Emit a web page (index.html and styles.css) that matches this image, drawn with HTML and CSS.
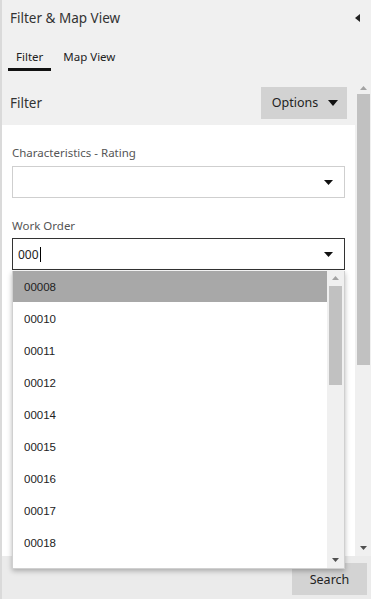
FILE: index.html
```html
<!DOCTYPE html>
<html>
<head>
<meta charset="utf-8">
<link rel="stylesheet" href="styles.css">
</head>
<body>
<div class="app">
  <div class="header">
    <span class="title">Filter &amp; Map View</span>
    <svg class="collapse" width="5" height="8" viewBox="0 0 5 8"><path d="M5 0 L0 4 L5 8 Z" fill="#222"/></svg>
  </div>
  <div class="tabs">
    <div class="tab active">Filter</div>
    <div class="tab">Map View</div>
  </div>
  <div class="main">
    <div class="content">
      <div class="section-head">
        <span class="section-title">Filter</span>
        <button class="options">Options
          <svg width="10" height="6" viewBox="0 0 10 6"><path d="M0 0 L10 0 L5 6 Z" fill="#111"/></svg>
        </button>
      </div>
      <div class="card">
        <div class="field">
          <div class="label">Characteristics - Rating</div>
          <div class="select">
            <span class="value"></span>
            <svg class="caret" width="9" height="5" viewBox="0 0 9 5"><path d="M0 0 L9 0 L4.5 5 Z" fill="#111"/></svg>
          </div>
        </div>
        <div class="field field2">
          <div class="label">Work Order</div>
          <div class="combo">
            <div class="select focused">
              <span class="value">000<span class="cursor"></span></span>
              <svg class="caret" width="9" height="5" viewBox="0 0 9 5"><path d="M0 0 L9 0 L4.5 5 Z" fill="#111"/></svg>
            </div>
            <div class="dropdown">
              <ul class="list">
                <li class="sel">00008</li>
                <li>00010</li>
                <li>00011</li>
                <li>00012</li>
                <li>00014</li>
                <li>00015</li>
                <li>00016</li>
                <li>00017</li>
                <li>00018</li>
              </ul>
              <div class="dscroll">
                <svg class="arr" width="7" height="4" viewBox="0 0 7 4"><path d="M0 4 L7 4 L3.5 0 Z" fill="#a3a3a3"/></svg>
                <div class="dthumb"></div>
                <div class="spacer"></div>
                <svg class="arr" width="7" height="4" viewBox="0 0 7 4"><path d="M0 0 L7 0 L3.5 4 Z" fill="#505050"/></svg>
              </div>
            </div>
          </div>
        </div>
      </div>
    </div>
    <div class="vscroll">
      <svg class="arr" width="7" height="4" viewBox="0 0 7 4"><path d="M0 4 L7 4 L3.5 0 Z" fill="#a3a3a3"/></svg>
      <div class="thumb"></div>
      <div class="spacer"></div>
      <svg class="arr" width="7" height="4" viewBox="0 0 7 4"><path d="M0 0 L7 0 L3.5 4 Z" fill="#505050"/></svg>
    </div>
  </div>
  <div class="footer">
    <button class="search">Search</button>
  </div>
</div>
</body>
</html>
```

FILE: styles.css
```css
* { box-sizing: border-box; }
html, body { margin: 0; padding: 0; }
body {
  background: #f0f0f0;
  font-family: "Noto Sans", "Open Sans", sans-serif;
  color: #333;
}
.app {
  width: 371px;
  height: 599px;
  border-left: 2px solid #dadada;
  display: flex;
  flex-direction: column;
  overflow: hidden;
}
.header {
  height: 36px;
  display: flex;
  align-items: center;
  justify-content: space-between;
  padding: 0 11px 0 8px;
}
.title { font-size: 13.5px; color: #333; }
.tabs {
  display: flex;
  padding: 12px 0 0 6px;
  gap: 4px;
  height: 44px;
}
.tab {
  font-size: 11.5px;
  line-height: 18px;
  height: 23px;
  padding: 0 8px 2px;
  color: #222;
  border-bottom: 3px solid transparent;
}
.tab.active { border-bottom-color: #111; }
.main {
  display: flex;
  height: 476px;
}
.content {
  width: 353px;
  display: flex;
  flex-direction: column;
}
.section-head {
  height: 45px;
  display: flex;
  align-items: center;
  justify-content: space-between;
  padding: 0 8px 0 8px;
}
.section-title { font-size: 13.5px; color: #333; }
.options {
  width: 86px;
  height: 32px;
  border: none;
  background: #d2d2d2;
  font-family: inherit;
  font-size: 12.5px;
  color: #222;
  display: flex;
  align-items: center;
  justify-content: center;
  gap: 10px;
  padding: 0 0 0 2px;
}
.card {
  flex: 1;
  background: #fff;
  padding: 20px 10px 0 10px;
}
.label {
  font-size: 11.5px;
  line-height: 16px;
  color: #555;
  margin-bottom: 5px;
}
.field2 { margin-top: 20px; }
.field2 .label { margin-bottom: 4px; }
.select {
  height: 32px;
  border: 1px solid #cfcfcf;
  background: #fff;
  display: flex;
  align-items: center;
  justify-content: space-between;
  padding: 0 11px 0 5px;
}
.select.focused { border-color: #333; }
.value {
  font-size: 12px;
  color: #222;
  display: flex;
  align-items: center;
}
.cursor {
  display: inline-block;
  width: 1px;
  height: 15px;
  background: #000;
  margin-left: 1px;
}
.combo { position: relative; }
.dropdown {
  position: absolute;
  top: 33px;
  left: 0;
  width: 333px;
  height: 298px;
  background: #fff;
  border: 1px solid #d0d0d0;
  border-top: none;
  box-shadow: 0 2px 5px rgba(0,0,0,0.28);
  display: flex;
  z-index: 5;
}
.list {
  list-style: none;
  margin: 0;
  padding: 0;
  flex: 1;
  font-family: "Liberation Sans", Arial, sans-serif;
  font-size: 11.5px;
  color: #222;
}
.list li {
  height: 32px;
  line-height: 32px;
  padding-left: 11px;
}
.list li.sel { background: #a8a8a8; height: 31px; line-height: 32px; margin-bottom: 1px; }
.dscroll {
  width: 17px;
  background: #f0f0f0;
  display: flex;
  flex-direction: column;
  align-items: center;
  padding: 5px 0 6px;
}
.dscroll .arr { flex: none; }
.dthumb {
  width: 13px;
  height: 99px;
  background: #c1c1c1;
  margin-top: 6px;
}
.spacer { flex: 1; }
.vscroll {
  width: 16px;
  display: flex;
  flex-direction: column;
  align-items: center;
  padding: 6px 0 6px;
}
.vscroll .arr { flex: none; }
.thumb {
  width: 13px;
  height: 271px;
  background: #c1c1c1;
  margin-top: 4px;
}
.footer {
  flex: 1;
  background: #ebebeb;
  display: flex;
  justify-content: flex-end;
  align-items: flex-start;
  padding: 7px 4px 0 0;
}
.search {
  width: 75px;
  height: 32px;
  border: none;
  background: #d3d3d3;
  font-family: inherit;
  font-size: 12.5px;
  color: #222;
}
```
